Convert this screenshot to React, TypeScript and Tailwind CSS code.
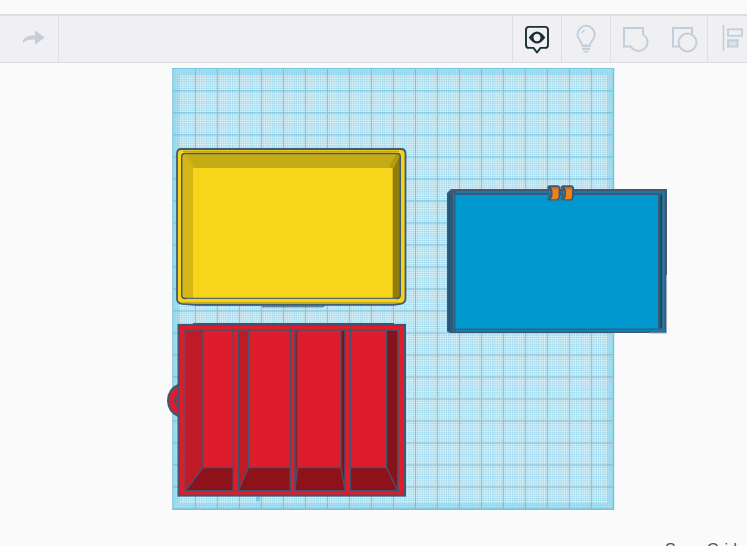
import React from "react";

const PLATE = { x: 173, y: 68.5, size: 441 };
const STEP = 2.205;
const minor = Array.from({ length: 201 }, (_, i) => i * STEP);
const major = Array.from({ length: 20 }, (_, i) => i * 22);

const RedoIcon = () => (
  <svg className="h-[46px] w-[58px]" viewBox="0 16 58 46">
    <path d="M23 43.500V40q3-4.800 12-4.800V30.500l10 7L35 44.500V39.500q-9-.7-12 4z" fill="#c3ced9" />
  </svg>
);

const EyeIcon = () => (
  <svg className="h-[46px] w-[48px]" viewBox="513 16 48 46" fill="none">
    <path d="M529 26.900h16q3 0 3 3v15q0 3-3 3h-4.500L537 52.500l-3.500-4.600H529q-3 0-3-3v-15q0-3 3-3z" stroke="#1b2f34" strokeWidth="1.900" strokeLinejoin="round" />
    <path fillRule="evenodd" d="M528.700 37.500q8.300-12 16.600 0-8.300 12-16.600 0zM537 33.700a3.500 3.800 0 1 0 .01 0z" fill="#1b2f34" />
  </svg>
);

const BulbIcon = () => (
  <svg className="h-[46px] w-[48px]" viewBox="562 16 48 46" fill="none" stroke="#c3d0dc">
    <path d="M582.500 46c0-4.500-5-6-5-11.200a8.600 9 0 0 1 17.200 0c0 5.200-5 6.700-5 11.200z" strokeWidth="2" />
    <path d="M581.500 45.500h9M582 48.800h8" strokeWidth="2.200" />
    <path d="M583.500 51.700h5" strokeWidth="1.700" />
    <path d="M581.300 33l3.300-3" strokeWidth="1.500" />
  </svg>
);

const GroupIcons = () => (
  <svg className="h-[46px] w-[96px]" viewBox="611 16 96 46" fill="none" stroke="#c1cfdb" strokeWidth="2">
    <path d="M624 28h19v6.500a8.800 8.800 0 1 1-12 12h-7z" />
    <path d="M680 46.500h-7V28h19v6" />
    <circle cx="687.500" cy="42.500" r="8.900" />
  </svg>
);

const AlignIcon = () => (
  <svg className="h-[46px] w-[39px]" viewBox="708 16 39 46" fill="none" stroke="#c1cfdb">
    <path d="M723.500 25v26" strokeWidth="1.600" />
    <rect x="728" y="29.300" width="14" height="6.500" strokeWidth="1.800" />
    <rect x="728" y="40.300" width="9.500" height="6.200" fill="#dae1e8" strokeWidth="2" />
  </svg>
);

const Workplane = () => (
  <g>
    <rect x="172.500" y="68" width="441.500" height="442" fill="#d4eff8" />
    <g stroke="#7fceea" strokeWidth="0.900" opacity="0.600">
      {minor.map((d, i) => (
        <React.Fragment key={i}>
          <path d={`M${PLATE.x + d} 68V510`} />
          <path d={`M172.500 ${PLATE.y + d}H614`} />
        </React.Fragment>
      ))}
    </g>
    <g stroke="#f2f7f8" strokeWidth="0.800" opacity="0.400">
      {minor.filter((_, i) => i % 5 !== 0 && i > 3 && i < 197).map((d) => (
        <React.Fragment key={d}>
          <path d={`M${PLATE.x + d + 1.1} 75V503`} />
          <path d={`M179 ${PLATE.y + d + 1.1}H607`} />
        </React.Fragment>
      ))}
    </g>
    <rect x="176" y="71.500" width="434.500" height="435" fill="none" stroke="#68c6e5" strokeWidth="7" opacity="0.250" />
    <g stroke="#429fc1" strokeWidth="1" opacity="0.480">
      {major.map((d, i) => (
        <React.Fragment key={i}>
          <path d={`M${195.300 + d} 68V510`} />
          <path d={`M172.500 ${90.900 + d}H614`} />
        </React.Fragment>
      ))}
    </g>
    <path d="M172.500 68.500H614M172.500 509.500H614M173 68V510M613.500 68V510" stroke="#73c5df" />
    <path d="M256 496.500h4v5h-4z" fill="#79cdeb" />
  </g>
);

const YellowTray = () => (
  <g>
    <path d="M195 305h130l-2 1.800H262M340 148.500h25" stroke="#405b71" strokeWidth="1" fill="none" />
    <path d="M181 149h220q4.500 0 4.500 5v144.500q0 5-6 5.500l-6 .8H195l-13-1q-5-.5-5-5V154q0-5 4-5z" fill="#f4d11a" stroke="#405b74" strokeWidth="1.800" />
    <path d="M183 151.300h216" stroke="#b69f19" />
    <path d="M182 303h217" stroke="#9a861d" />
    <path d="M182 153h218v145H182z" fill="#f7d51b" />
    <path d="M184 153h213l-4 15H193z" fill="#c5ab15" />
    <path d="M182 155l11 13v130h-11z" fill="#d4b617" />
    <path d="M182 155l2-2h4l7 15h-2z" fill="#cbb016" />
    <path d="M400 155l-7 13v130h7z" fill="#8f7d0f" />
    <path d="M392.500 168v130" stroke="#d9bb17" />
    <path d="M400 155l-7.500 13-3.500-1 8-14z" fill="#b1990f" />
    <path d="M185 153.500h212q3.300 0 3.300 3.500v138q0 3.500-3.300 3.500H185q-3.300 0-3.300-3.500V157q0-3.500 3.300-3.500z" fill="none" stroke="#405b67" strokeWidth="1.400" />
    <path d="M186 299.300h210" stroke="#fbe34f" strokeWidth="0.700" />
  </g>
);

const RedDivider = () => (
  <g stroke="#42566f">
    <path d="M179 384.500q-11 5-11 16t11 16z" fill="#de1c2d" strokeWidth="2" />
    <path d="M179 396q-4 .5-4 4.500t4 4.500" fill="none" strokeWidth="1.800" />
    <path d="M193 323.500h201" strokeWidth="1.200" />
    <rect x="178.500" y="324.900" width="226.500" height="170.700" fill="#df1c2b" strokeWidth="2" />
    <g stroke="none">
      <path d="M185.500 330.500H203V467.500l-17.500 22.500z" fill="#bf1a26" />
      <path d="M238.500 330.500h10V467.500l-10 22.500z" fill="#bf1a26" />
      <path d="M294.800 330.500h2.700V467.500l-2.700 22.500z" fill="#9d1724" />
      <path d="M341 330.500h4v160l-4-23z" fill="#7c1420" />
      <path d="M386.500 330.500h11v160l-11-23z" fill="#85131c" />
      <path d="M203 467.500h30.500v23H185.500zM248.500 467.500H290v23h-51.500zM297.500 467.500H341l4 23h-50zM350 467.500h36.500l11 23H350z" fill="#8f121b" />
    </g>
    <g fill="none" strokeWidth="1.300">
      <path d="M203 330V467.500l-17.500 23M203 467.500h30.500M248.500 330V467.500l-10 23M248.500 467.500H290M297.500 330V467.500l-2.500 23M297.500 467.500H341M341 330V467.500l4 23M350 467.500h36.500V330M386.500 467.500l11 23" />
      <path d="M183.500 330h215M185 490.700h48M238.500 490.700H290M294.500 490.700H345M350 490.700h49" />
      <path d="M185.200 330V490.700M233.300 328V492M238.300 330V490.700M290.300 328V492M295 330V490.700M345 330V490.700M350.200 328V492M398 330V490.700" strokeWidth="1.500" />
    </g>
  </g>
);

const BlueLid = () => (
  <g>
    <path d="M447 193l4-4h216v144H450l-3-1.500z" fill="#415975" />
    <path d="M448.500 194.500l2-2V331h-2z" fill="#115b80" />
    <path d="M451.700 194V330M453.700 193V330" stroke="#0e648b" strokeWidth="1.200" />
    <path d="M456 192H663M456 330.700H665M663.500 192V330" stroke="#0e83b6" strokeWidth="1.700" fill="none" />
    <path d="M661 195V328" stroke="#07516b" strokeWidth="2" />
    <rect x="455.500" y="195" width="202.500" height="133.500" fill="#0099cf" />
    <path d="M453.600 193V330" stroke="#167bab" />
    <path d="M666.500 275v58M650 333h17" stroke="#a2acba" strokeWidth="1" />
  </g>
);

const Hinges = () => (
  <g>
    {[0, 13.500].map((dx) => (
      <g key={dx} transform={`translate(${dx} 0)`}>
        <path d="M547 187l2-1.800h9.500l2 2v10l-2 3.300h-10l-1.500-1.500 1.500-2v-7z" fill="#405870" />
        <path d="M549 191h2v3.500h-2z" fill="#0c87bd" />
        <path d="M551.500 187.500h7v10l-1.500 1.800H551l1.500-3.500v-5z" fill="#f08018" />
        <path d="M551 187.500h7.500v2h-6z" fill="#d96e16" />
      </g>
    ))}
  </g>
);

export default function App() {
  return (
    <div className="flex h-[546px] w-[747px] flex-col overflow-hidden bg-[#fafafa] font-['Liberation_Sans',Arial,sans-serif]">
      <div className="h-[14px] shrink-0" />
      <header className="flex h-[49px] shrink-0 border-t-2 border-b border-t-[#d9dee3] border-b-[#dcdfe5] bg-[#f0f0f2]">
        <div className="w-[59px] border-r border-[#dce0e5]"><RedoIcon /></div>
        <div className="flex-1" />
        <div className="w-[49px] border-l border-[#dce0e5]"><EyeIcon /></div>
        <div className="w-[49px] border-l border-[#dce0e5]"><BulbIcon /></div>
        <div className="w-[97px] border-l border-[#dce0e5]"><GroupIcons /></div>
        <div className="w-[40px] border-l border-[#dce0e5]"><AlignIcon /></div>
      </header>
      <main className="h-[478px] shrink-0">
        <svg className="block h-[478px] w-[747px]" viewBox="0 63 747 478">
          <Workplane />
          <YellowTray />
          <RedDivider />
          <BlueLid />
          <Hinges />
        </svg>
      </main>
      <footer className="flex h-[5px] shrink-0 justify-end overflow-hidden pr-[10px] text-base leading-[18px] text-[#4b5563]">
        <span className="whitespace-nowrap">Snap Grid</span>
      </footer>
    </div>
  );
}
